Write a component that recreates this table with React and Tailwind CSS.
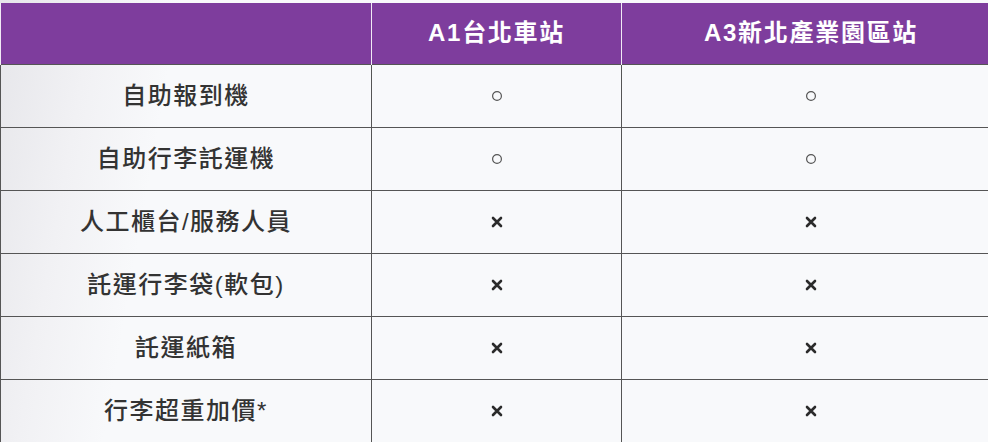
import React from 'react';

const rows = [
  { name: '自助報到機', a1: 'o', a3: 'o' },
  { name: '自助行李託運機', a1: 'o', a3: 'o' },
  { name: '人工櫃台/服務人員', a1: 'x', a3: 'x' },
  { name: '託運行李袋(軟包)', a1: 'x', a3: 'x' },
  { name: '託運紙箱', a1: 'x', a3: 'x' },
  { name: '行李超重加價*', a1: 'x', a3: 'x' },
];

function Mark({ type }) {
  if (type === 'o') {
    return (
      <svg width="12" height="12" viewBox="0 0 12 12" className="inline-block">
        <circle cx="6" cy="6" r="4.4" fill="none" stroke="#555" strokeWidth="1.2" />
      </svg>
    );
  }
  return (
    <svg width="12" height="12" viewBox="0 0 12 12" className="inline-block">
      <path d="M2 2 L10 10 M10 2 L2 10" stroke="#2b2b2b" strokeWidth="2.6" strokeLinecap="round" />
    </svg>
  );
}

export default function App() {
  return (
    <div
      className="w-[988px] h-[442px] overflow-hidden bg-[linear-gradient(100deg,#e6e6ea_0%,#f1f1f4_9%,#f8f9fb_17%,#f8f9fb_100%)] pt-[3px]"
      style={{ fontFamily: '"Liberation Sans", "Noto Sans CJK TC", sans-serif' }}
    >
      <table className="border-collapse table-fixed w-[1000px]">
        <colgroup>
          <col className="w-[371px]" />
          <col className="w-[250px]" />
          <col className="w-[379px]" />
        </colgroup>
        <thead>
          <tr className="bg-[#7e3d9d] h-[61px]">
            <th className="border-x border-[#f1eaf5]"></th>
            <th className="border-x border-[#f1eaf5] text-white text-[24px] font-bold tracking-[1.7px] text-center">A1台北車站</th>
            <th className="border-x border-[#f1eaf5] text-white text-[24px] font-bold tracking-[1.7px] text-center">A3新北產業園區站</th>
          </tr>
        </thead>
        <tbody>
          {rows.map((r) => (
            <tr key={r.name} className="h-[63px]">
              <td className="border border-[#555] text-center text-[24px] font-medium tracking-[1.5px] text-[#333]">{r.name}</td>
              <td className="border border-[#555] text-center"><Mark type={r.a1} /></td>
              <td className="border border-[#555] text-center"><Mark type={r.a3} /></td>
            </tr>
          ))}
        </tbody>
      </table>
    </div>
  );
}
